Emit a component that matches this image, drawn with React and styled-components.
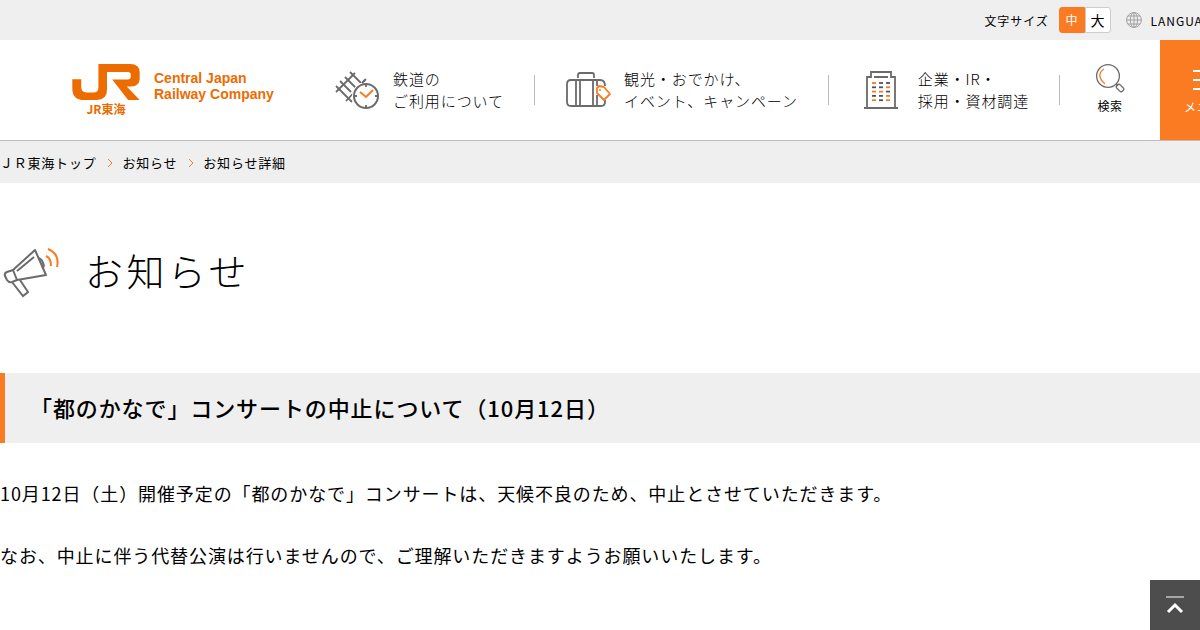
import React from 'react';
import styled, { createGlobalStyle } from 'styled-components';

const colors = {
  orange: '#fa7b22',
  logo: '#ec6c00',
  grey: '#efefef',
  line: '#bbb',
  icon: '#6b6b6b',
};

const GlobalStyle = createGlobalStyle`
  * {
    box-sizing: border-box;
  }
  body {
    margin: 0;
    background: #fff;
    color: #000;
    font-family: 'Noto Sans CJK JP', sans-serif;
    font-size: 18px;
    letter-spacing: 0.05em;
  }
  a {
    color: inherit;
    text-decoration: none;
  }
  svg {
    display: block;
    flex: none;
  }
`;

const Page = styled.div`
  overflow: hidden;
`;

const Header = styled.header`
  min-width: 1260px;
  border-bottom: 1px solid ${colors.line};
`;

const Utility = styled.div`
  display: flex;
  align-items: center;
  justify-content: flex-end;
  height: 40px;
  padding-right: 40px;
  background: ${colors.grey};
  font-size: 12px;
`;

const SizeButtons = styled.div`
  display: flex;
  margin: 0 15px 0 10px;
`;

const SizeButton = styled.button`
  width: 26px;
  height: 26px;
  padding: 0;
  border: 1px solid ${props => (props.$active ? colors.orange : '#ccc')};
  border-radius: ${props => (props.$active ? '3px 0 0 3px' : '0 3px 3px 0')};
  background: ${props => (props.$active ? colors.orange : '#fff')};
  color: ${props => (props.$active ? '#fff' : '#000')};
  font-family: inherit;
  font-size: ${props => (props.$large ? '14px' : '12px')};
  line-height: 24px;
`;

const Language = styled.a`
  display: flex;
  align-items: center;
  gap: 9px;
  letter-spacing: 0.08em;
`;

const Bar = styled.div`
  display: flex;
  align-items: stretch;
  height: 100px;
  padding-left: 72px;
`;

const Logo = styled.a`
  display: flex;
  gap: 14px;
  width: 232px;
  padding-top: 24px;
  color: ${colors.logo};
  letter-spacing: 0;
`;

const Mark = styled.span`
  display: flex;
  flex-direction: column;
  align-items: center;
  gap: 1px;
  font-size: 12px;
  font-weight: 700;
  line-height: 16px;
`;

const Company = styled.span`
  padding-top: 6px;
  font-family: 'Liberation Sans', sans-serif;
  font-size: 14px;
  font-weight: 700;
  line-height: 16px;
  white-space: nowrap;
`;

const Nav = styled.nav`
  display: flex;
  flex: 1;
  align-items: center;
`;

const NavItem = styled.a`
  display: flex;
  align-items: center;
  justify-content: center;
  gap: ${props => (props.$wide ? '20px' : '12px')};
  flex: ${props => props.$grow} 1 0;
  height: 30px;
  padding-left: ${props => (props.$wide ? '5px' : '1px')};
  border-right: 1px solid ${colors.line};
  font-size: 15px;
  font-weight: 300;
  letter-spacing: 0.06em;
  line-height: 22px;
  white-space: nowrap;
`;

const Search = styled.button`
  display: flex;
  flex-direction: column;
  align-items: center;
  gap: 3px;
  width: 100px;
  padding: 23px 0 0;
  border: 0;
  background: none;
  color: #000;
  font-family: inherit;
  font-size: 12px;
  letter-spacing: 0.05em;
  line-height: 20px;
`;

const Menu = styled.button`
  display: flex;
  flex-direction: column;
  align-items: center;
  gap: 6px;
  width: 100px;
  padding: 29px 0 0;
  border: 0;
  background: ${colors.orange};
  color: #fff;
  font-family: inherit;
  font-size: 12px;
  letter-spacing: 0.08em;
  line-height: 20px;
`;

const Breadcrumb = styled.nav`
  height: 42px;
  background: ${colors.grey};
  font-size: 13px;
  letter-spacing: 0.06em;
  line-height: 44px;

  ol {
    display: flex;
    margin: 0;
    padding: 0;
    list-style: none;
  }
  li {
    display: flex;
    align-items: center;
  }
  svg {
    margin: 0 8px 0 11px;
  }
`;

const PageTitle = styled.h1`
  display: flex;
  align-items: center;
  gap: 23px;
  margin: 0;
  padding: 57px 0 73px;
  font-size: 38px;
  font-weight: 300;
  letter-spacing: 0.09em;
  line-height: 60px;
`;

const ArticleTitle = styled.h2`
  margin: 0 0 35px;
  padding: 17px 25px 18px;
  border-left: 5px solid ${colors.orange};
  background: ${colors.grey};
  font-size: 22px;
  font-weight: 500;
  line-height: 35px;
`;

const Paragraph = styled.p`
  margin: 0 0 31px;
  line-height: 31px;
`;

const PageTop = styled.a`
  position: fixed;
  right: 0;
  bottom: 0;
  display: flex;
  align-items: center;
  justify-content: center;
  width: 50px;
  height: 50px;
  background: #4d4d4d;
`;

const JrMark = () => (
  <svg width="68" height="36" viewBox="0 0 204 109" fill={colors.logo}>
    <path
      fillRule="evenodd"
      d="M79 0H176Q204 0 204 26V44Q204 68 178 68H165L204 109H169L121 47H168Q177 47 177 37V34Q177 24 168 24H105V78Q105 109 74 109H36Q0 109 0 74V46H27V70Q27 86 43 86H64Q79 86 79 71Z"
    />
  </svg>
);

const RailIcon = () => (
  <svg width="46" height="40" viewBox="0 0 46 40" fill="none" stroke={colors.icon} strokeWidth="1.8">
    <path d="M1 22L20 3M11 31L28 13M28 12L31 9" />
    <path d="M1 16L10 25M5 11L16 22M10 7L21 18M15 2L26 13M10 25L17 32" />
    <circle cx="31" cy="26" r="14" fill="#fff" stroke="none" />
    <circle cx="31" cy="26" r="12" strokeWidth="2" />
    <path d="M31 14V17M31 35V38M19 26H22M40 26H43M27 13L30 10" />
    <path d="M25 22L31 27L38 20" stroke={colors.orange} strokeWidth="2" />
  </svg>
);

const BagIcon = () => (
  <svg width="46" height="36" viewBox="0 0 46 36" fill="none" stroke={colors.icon} strokeWidth="1.8">
    <path d="M12 6V3Q12 1 14 1H26Q28 1 28 3V6" />
    <path d="M34 8H5Q1 8 1 12V30Q1 34 5 34H35Q39 34 39 30V28M34 8Q39 8 39 14M10 8V34M14 8V34M27 8V34M31 8V14M31 23V34" />
    <path
      d="M31 16L33 14L38 15L44 22L38 28L31 21Z"
      fill="#fff"
      stroke={colors.orange}
      strokeLinejoin="round"
    />
    <circle cx="34" cy="18" r="1" fill={colors.orange} stroke="none" />
  </svg>
);

const windows = [
  [1, 0, 0],
  [0, 0, 1],
  [1, 1, 0],
  [0, 0, 1],
  [1, 0, 1],
];

const BuildingIcon = () => (
  <svg width="34" height="38" viewBox="0 0 34 38" fill="none" stroke={colors.icon} strokeWidth="1.8">
    <path d="M3 37V6H7V1H27V6H31V37M0 37H34M10 6H24" />
    {windows.map((row, y) =>
      row.map((lit, x) => (
        <path
          key={`${y}-${x}`}
          d={`M${8 + x * 7} ${12 + y * 4.3}h4`}
          stroke={lit ? colors.orange : '#4d5360'}
          strokeWidth="1.8"
        />
      ))
    )}
  </svg>
);

const SearchIcon = () => (
  <svg width="30" height="30" viewBox="0 0 30 30" fill="none" stroke={colors.icon} strokeWidth="1.3">
    <circle cx="13" cy="13" r="11.4" />
    <path d="M9 6Q4 9 5 14Q6 18 10 21" stroke={colors.orange} />
    <path d="M21 21L23 23" />
    <rect x="-2.4" y="-4" width="4.8" height="8" rx="2" transform="translate(25 25) rotate(-45)" />
  </svg>
);

const GlobeIcon = () => (
  <svg width="16" height="16" viewBox="0 0 16 16" fill="none" stroke="#a0a0a0">
    <circle cx="8" cy="8" r="7.4" />
    <ellipse cx="8" cy="8" rx="3.6" ry="7.4" />
    <path d="M8 0V16M0 8H16M2 4H14M2 12H14" />
  </svg>
);

const MegaphoneIcon = () => (
  <svg width="62" height="58" viewBox="0 -6 62 58" fill="none" stroke={colors.icon} strokeWidth="2">
    <path d="M13 23L35 3L46 28L17 33Z" strokeLinejoin="round" />
    <path d="M13 23L7 25Q4 26 5 29L7 33Q9 36 12 35L17 33M17 24L34 10" />
    <path d="M12 35L23 49L28 45L20 33M38 11Q42 12 43 16Q45 20 42 21" />
    <path d="M46 9Q51 11 51 19M48 2Q60 7 57 20" stroke={colors.orange} />
  </svg>
);

const crumbs = ['ＪＲ東海トップ', 'お知らせ', 'お知らせ詳細'];

const Crumbs = () => (
  <Breadcrumb aria-label="パンくず">
    <ol>
      {crumbs.map((name, i) => (
        <li key={name}>
          {i > 0 && (
            <svg width="7" height="10" viewBox="0 0 7 10" fill="none" stroke={colors.orange}>
              <path d="M1 1L5 5L1 9" />
            </svg>
          )}
          {i < crumbs.length - 1 ? <a href="#">{name}</a> : <span>{name}</span>}
        </li>
      ))}
    </ol>
  </Breadcrumb>
);

export default function App() {
  return (
    <Page>
      <GlobalStyle />
      <Header>
        <Utility>
          <span>文字サイズ</span>
          <SizeButtons>
            <SizeButton $active>中</SizeButton>
            <SizeButton $large>大</SizeButton>
          </SizeButtons>
          <Language href="#">
            <GlobeIcon />
            LANGUAGE
          </Language>
        </Utility>
        <Bar>
          <Logo href="#">
            <Mark>
              <JrMark />
              JR東海
            </Mark>
            <Company>
              Central Japan
              <br />
              Railway Company
            </Company>
          </Logo>
          <Nav>
            <NavItem href="#" $grow={229}>
              <RailIcon />
              <span>
                鉄道の
                <br />
                ご利用について
              </span>
            </NavItem>
            <NavItem href="#" $grow={292}>
              <BagIcon />
              <span>
                観光・おでかけ、
                <br />
                イベント、キャンペーン
              </span>
            </NavItem>
            <NavItem href="#" $grow={225} $wide>
              <BuildingIcon />
              <span>
                企業・IR・
                <br />
                採用・資材調達
              </span>
            </NavItem>
          </Nav>
          <Search>
            <SearchIcon />
            検索
          </Search>
          <Menu>
            <svg width="34" height="22" viewBox="0 0 34 22" stroke="#fff" strokeWidth="2">
              <path d="M0 2H34M0 11H34M0 20H34" />
            </svg>
            メニュー
          </Menu>
        </Bar>
      </Header>
      <Crumbs />
      <main>
        <PageTitle>
          <MegaphoneIcon />
          お知らせ
        </PageTitle>
        <ArticleTitle>「都のかなで」コンサートの中止について（10月12日）</ArticleTitle>
        <Paragraph>
          10月12日（土）開催予定の「都のかなで」コンサートは、天候不良のため、中止とさせていただきます。
        </Paragraph>
        <Paragraph>
          なお、中止に伴う代替公演は行いませんので、ご理解いただきますようお願いいたします。
        </Paragraph>
      </main>
      <PageTop href="#" aria-label="ページトップへ">
        <svg width="18" height="18" viewBox="0 0 18 18" fill="none" stroke="#fff">
          <path d="M0 1H18" />
          <path d="M2 16L9 9L16 16" strokeWidth="3" />
        </svg>
      </PageTop>
    </Page>
  );
}
